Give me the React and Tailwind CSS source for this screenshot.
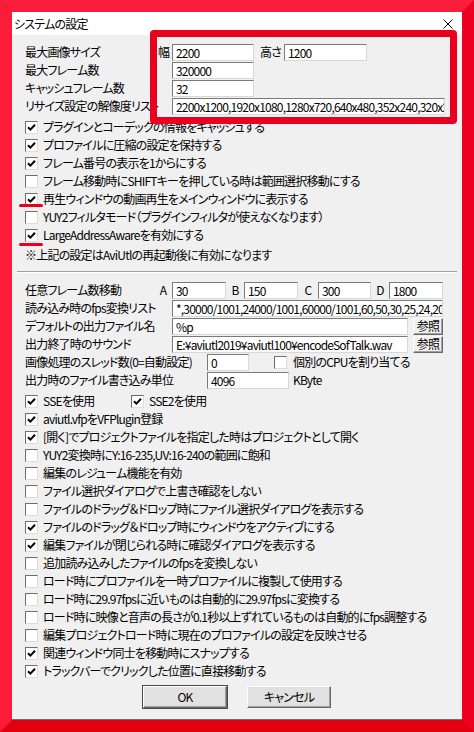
import React from 'react';

const font = "font-['Noto_Sans_CJK_JP',sans-serif] [font-feature-settings:'palt'] tracking-[-0.8px]";

function Edit({ className = '', children }) {
  return (
    <div className={`h-[17px] shrink-0 bg-white border border-[#7a7a7a] border-r-[#d8d8d8] border-b-[#d8d8d8] pl-[3px] leading-[15px] overflow-hidden whitespace-nowrap ${className}`}>
      {children}
    </div>
  );
}

function Check({ on }) {
  return (
    <span className="w-[13px] h-[13px] shrink-0 bg-white border border-[#6d6d6d] border-r-[#dcdcdc] border-b-[#dcdcdc] flex items-center justify-center">
      {on && (
        <svg width="9" height="9" viewBox="0 0 9 9">
          <path d="M1 4.2 L3.4 6.6 L8 1.8" fill="none" stroke="#000" strokeWidth="2" />
        </svg>
      )}
    </span>
  );
}

function CheckRow({ on, children }) {
  return (
    <div className="h-[18px] flex items-center gap-[5px]">
      <Check on={on} />
      <span className="whitespace-nowrap">{children}</span>
    </div>
  );
}

function Btn({ className = '', children }) {
  return (
    <div className={`shrink-0 flex items-center justify-center border border-white border-r-[#696969] border-b-[#696969] shadow-[inset_-1px_-1px_0_#a0a0a0] ${className}`}>
      {children}
    </div>
  );
}

const topChecks = [
  [true, 'プラグインとコーデックの情報をキャッシュする'],
  [true, 'プロファイルに圧縮の設定を保持する'],
  [true, 'フレーム番号の表示を1からにする'],
  [false, 'フレーム移動時にSHIFTキーを押している時は範囲選択移動にする'],
  [true, '再生ウィンドウの動画再生をメインウィンドウに表示する'],
  [false, 'YUY2フィルタモード（プラグインフィルタが使えなくなります）'],
  [true, 'LargeAddressAwareを有効にする'],
];

const bottomChecks = [
  [true, 'aviutl.vfpをVFPlugin登録'],
  [true, '[開く]でプロジェクトファイルを指定した時はプロジェクトとして開く'],
  [false, 'YUY2変換時にY:16-235,UV:16-240の範囲に飽和'],
  [false, '編集のレジューム機能を有効'],
  [false, 'ファイル選択ダイアログで上書き確認をしない'],
  [false, 'ファイルのドラッグ＆ドロップ時にファイル選択ダイアログを表示する'],
  [true, 'ファイルのドラッグ＆ドロップ時にウィンドウをアクティブにする'],
  [true, '編集ファイルが閉じられる時に確認ダイアログを表示する'],
  [false, '追加読み込みしたファイルのfpsを変換しない'],
  [false, 'ロード時にプロファイルを一時プロファイルに複製して使用する'],
  [false, 'ロード時に29.97fpsに近いものは自動的に29.97fpsに変換する'],
  [false, 'ロード時に映像と音声の長さが0.1秒以上ずれているものは自動的にfps調整する'],
  [false, '編集プロジェクトロード時に現在のプロファイルの設定を反映させる'],
  [true, '関連ウィンドウ同士を移動時にスナップする'],
  [true, 'トラックバーでクリックした位置に直接移動する'],
];

export default function App() {
  return (
    <div className={`relative w-[474px] h-[732px] overflow-hidden text-[12px] text-black ${font}`}>
      {/* red frame around the dialog */}
      <div className="w-full h-full border-[12px] border-t-[#fa1e3c] border-l-[#fb1c3a] border-r-[#ee0022] border-b-[#e3000e] flex flex-col">
        {/* title bar */}
        <div className="h-[23px] shrink-0 bg-white flex items-center justify-between pl-[2px] pr-[9px]">
          <span>システムの設定</span>
          <svg width="10" height="10" viewBox="0 0 10 10">
            <path d="M0.5 0.5 L9.5 9.5 M9.5 0.5 L0.5 9.5" stroke="#000" strokeWidth="1" />
          </svg>
        </div>

        {/* body */}
        <div className="flex-1 bg-[#f0f0f0] border-b border-[#6f6f6f] pl-[13px] pt-[8px] flex flex-col">
          <div className="h-[18px] flex items-center">
            <span className="w-[133px] shrink-0 whitespace-nowrap">最大画像サイズ</span>
            <span className="w-[14px] shrink-0">幅</span>
            <Edit className="w-[82px]">2200</Edit>
            <span className="w-[30px] shrink-0 pl-[6px]">高さ</span>
            <Edit className="w-[83px]">1200</Edit>
          </div>
          <div className="h-[18px] flex items-center">
            <span className="w-[147px] shrink-0 whitespace-nowrap">最大フレーム数</span>
            <Edit className="w-[82px]">320000</Edit>
          </div>
          <div className="h-[18px] flex items-center">
            <span className="w-[147px] shrink-0 whitespace-nowrap">キャッシュフレーム数</span>
            <Edit className="w-[82px]">32</Edit>
          </div>
          <div className="h-[18px] flex items-center">
            <span className="w-[147px] shrink-0 whitespace-nowrap overflow-hidden">リサイズ設定の解像度リスト</span>
            <Edit className="w-[273px]">2200x1200,1920x1080,1280x720,640x480,352x240,320x240</Edit>
          </div>

          <div className="mt-[3px] flex flex-col">
            {topChecks.map(([on, t]) => (
              <CheckRow key={t} on={on}>{t}</CheckRow>
            ))}
          </div>
          <div className="mt-[2px] h-[18px] flex items-center whitespace-nowrap">※上記の設定はAviUtlの再起動後に有効になります</div>

          <div className="mt-[7px] -ml-[8px] w-[440px] border-t border-b border-t-[#a0a0a0] border-b-white" />

          <div className="mt-[8px] h-[18px] flex items-center">
            <span className="w-[129px] shrink-0 whitespace-nowrap">任意フレーム数移動</span>
            <span className="w-[18px] shrink-0 text-center">A</span>
            <Edit className="w-[54px]">30</Edit>
            <span className="w-[18px] shrink-0 text-center">B</span>
            <Edit className="w-[54px]">150</Edit>
            <span className="w-[20px] shrink-0 text-center">C</span>
            <Edit className="w-[53px]">300</Edit>
            <span className="w-[18px] shrink-0 text-center">D</span>
            <Edit className="w-[54px]">1800</Edit>
          </div>
          <div className="h-[18px] flex items-center">
            <span className="w-[147px] shrink-0 whitespace-nowrap">読み込み時のfps変換リスト</span>
            <Edit className="w-[271px]">*,30000/1001,24000/1001,60000/1001,60,50,30,25,24,20,15</Edit>
          </div>
          <div className="h-[18px] flex items-center">
            <span className="w-[147px] shrink-0 whitespace-nowrap">デフォルトの出力ファイル名</span>
            <Edit className="w-[236px]">%p</Edit>
            <Btn className="ml-[5px] w-[30px] h-[17px] bg-[#f0f0f0]">参照</Btn>
          </div>
          <div className="h-[18px] flex items-center">
            <span className="w-[147px] shrink-0 whitespace-nowrap">出力終了時のサウンド</span>
            <Edit className="w-[236px]">E:¥aviutl2019¥aviutl100¥encodeSofTalk.wav</Edit>
            <Btn className="ml-[5px] w-[30px] h-[17px] bg-[#f0f0f0]">参照</Btn>
          </div>
          <div className="h-[18px] flex items-center">
            <span className="w-[182px] shrink-0 whitespace-nowrap">画像処理のスレッド数(0=自動設定)</span>
            <Edit className="w-[42px]">0</Edit>
            <div className="ml-[25px] flex items-center gap-[6px]">
              <Check on={false} />
              <span className="whitespace-nowrap">個別のCPUを割り当てる</span>
            </div>
          </div>
          <div className="h-[18px] flex items-center">
            <span className="w-[182px] shrink-0 whitespace-nowrap">出力時のファイル書き込み単位</span>
            <Edit className="w-[82px]">4096</Edit>
            <span className="ml-[4px]">KByte</span>
          </div>

          <div className="mt-[3px] flex flex-col">
            <div className="h-[18px] flex items-center">
              <div className="w-[106px] flex items-center gap-[5px]">
                <Check on />
                <span className="whitespace-nowrap">SSEを使用</span>
              </div>
              <div className="flex items-center gap-[5px]">
                <Check on />
                <span className="whitespace-nowrap">SSE2を使用</span>
              </div>
            </div>
            {bottomChecks.map(([on, t]) => (
              <CheckRow key={t} on={on}>{t}</CheckRow>
            ))}
          </div>

          <div className="mt-[6px] pr-[13px] flex justify-center gap-[20px]">
            <Btn className="w-[84px] h-[22px] bg-[#e1e1e1] outline outline-1 outline-[#4a4a4a]">OK</Btn>
            <Btn className="w-[84px] h-[22px] bg-[#e1e1e1]">キャンセル</Btn>
          </div>
        </div>
      </div>

      {/* red annotation marks */}
      <div className="absolute left-[150px] top-[30px] w-[307px] h-[94px] border-[7px] border-[#e8001e] rounded-[4px]" />
      <div className="absolute left-[19px] top-[204px] w-[24px] h-[3px] rounded-full bg-[#e8001e]" />
      <div className="absolute left-[19px] top-[243px] w-[24px] h-[3px] rounded-full bg-[#e8001e]" />
    </div>
  );
}
